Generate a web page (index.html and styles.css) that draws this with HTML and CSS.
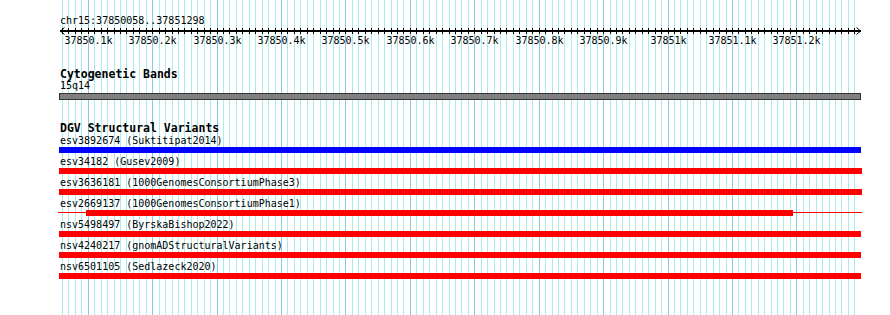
FILE: index.html
```html
<!DOCTYPE html>
<html>
<head>
<meta charset="utf-8">
<title>Genome view</title>
<link rel="stylesheet" href="styles.css">
</head>
<body>
<div class="view">
  <svg class="grid" id="grid" width="890" height="315" shape-rendering="crispEdges"></svg>
  <div class="content">
    <div class="ruler">
      <div class="loc">chr15:37850058..37851298</div>
      <svg class="scale" id="scale" width="890" height="20" shape-rendering="crispEdges">
        <rect x="60" y="3" width="801" height="2" fill="#000"></rect>
        <polyline points="64.5,0.5 60.5,4 64.5,7.5" fill="none" stroke="#000" stroke-width="1" shape-rendering="auto"></polyline>
        <polyline points="856.5,0.5 860.5,4 856.5,7.5" fill="none" stroke="#000" stroke-width="1" shape-rendering="auto"></polyline>
      </svg>
    </div>

    <section class="track cyto">
      <h2 class="track-title">Cytogenetic Bands</h2>
      <div class="feat-label">15q14</div>
      <div class="band"></div>
    </section>

    <section class="track dgv">
      <h2 class="track-title">DGV Structural Variants</h2>
      <div class="sv-list">
        <div class="sv">
          <div class="feat-label">esv3892674 (Suktitipat2014)</div>
          <div class="sv-bar blue" style="width:802px"></div>
        </div>
        <div class="sv">
          <div class="feat-label">esv34182 (Gusev2009)</div>
          <div class="sv-bar" style="width:803px"></div>
        </div>
        <div class="sv">
          <div class="feat-label">esv3636181 (1000GenomesConsortiumPhase3)</div>
          <div class="sv-bar" style="width:803px"></div>
        </div>
        <div class="sv">
          <div class="feat-label">esv2669137 (1000GenomesConsortiumPhase1)</div>
          <div class="sv-split">
            <div class="thin" style="width:28px"></div>
            <div class="thick" style="width:707px"></div>
            <div class="thin" style="width:69px"></div>
          </div>
        </div>
        <div class="sv">
          <div class="feat-label">nsv5498497 (ByrskaBishop2022)</div>
          <div class="sv-bar" style="width:802px"></div>
        </div>
        <div class="sv">
          <div class="feat-label">nsv4240217 (gnomADStructuralVariants)</div>
          <div class="sv-bar" style="width:802px"></div>
        </div>
        <div class="sv">
          <div class="feat-label">nsv6501105 (Sedlazeck2020)</div>
          <div class="sv-bar" style="width:802px"></div>
        </div>
      </div>
    </section>
  </div>
</div>
<script src="script.js"></script>
</body>
</html>
```

FILE: styles.css
```css
* { box-sizing: content-box; }

body {
  margin: 0;
  background: #ffffff;
  color: #000;
  font-family: "DejaVu Sans Mono", "Liberation Mono", monospace;
  font-size: 10px;
}

.view {
  position: relative;
  width: 890px;
  height: 315px;
  overflow: hidden;
}

.grid {
  position: absolute;
  left: 0;
  top: 0;
  z-index: 0;
}

.content {
  position: relative;
  z-index: 1;
}

.loc {
  padding-top: 15px;
  margin-left: 59px;
  padding-left: 1px;
  line-height: 12px;
}

.scale {
  display: block;
}

.scale-label {
  font-family: "DejaVu Sans Mono", "Liberation Mono", monospace;
  font-size: 10px;
}

.track {
  margin-left: 59px;
  width: 803px;
}

.track-title {
  margin: 0;
  padding-left: 1px;
  font-size: 11.5px;
  font-weight: bold;
  line-height: 12px;
}

.cyto {
  margin-top: 21px;
}

.feat-label {
  padding-left: 1px;
  line-height: 12px;
  white-space: nowrap;
}

.band {
  margin-top: 1px;
  width: 800px;
  height: 5px;
  border: 1px solid #333;
  background: #808080;
}

.dgv {
  margin-top: 22px;
}

.sv-list {
  margin-top: 1px;
}

.sv {
  margin-bottom: 3px;
}

.sv-bar {
  height: 6px;
  background: #ff0000;
}

.sv-bar.blue {
  background: #0000ff;
}

.sv-split {
  display: flex;
  align-items: flex-start;
  height: 6px;
  margin-left: -1px;
}

.sv-split .thin {
  height: 1px;
  margin-top: 2px;
  background: #ff0000;
}

.sv-split .thick {
  height: 6px;
  background: #ff0000;
}
```

FILE: script.js
```js
(function () {
  var NS = "http://www.w3.org/2000/svg";
  var start = 37850058;
  var x0 = 60.7;
  var scale = 0.6442;
  function px(bp) { return Math.round(x0 + (bp - start) * scale) + 0.5; }

  var grid = document.getElementById("grid");
  var sc = document.getElementById("scale");

  for (var bp = 37850060; bp <= 37851298; bp += 10) {
    var x = px(bp);
    var major = bp % 100 === 0;
    var l = document.createElementNS(NS, "line");
    l.setAttribute("x1", x); l.setAttribute("x2", x);
    l.setAttribute("y1", 0); l.setAttribute("y2", 315);
    l.setAttribute("stroke", major ? "#88c8ea" : "#aaecec");
    l.setAttribute("stroke-width", 1);
    grid.appendChild(l);

    var t = document.createElementNS(NS, "line");
    t.setAttribute("x1", x); t.setAttribute("x2", x);
    t.setAttribute("y1", 1); t.setAttribute("y2", 7);
    t.setAttribute("stroke", "#000");
    t.setAttribute("stroke-width", 1);
    sc.appendChild(t);

    if (major) {
      var k = bp / 1000;
      var txt = document.createElementNS(NS, "text");
      txt.setAttribute("x", x);
      txt.setAttribute("y", 17);
      txt.setAttribute("text-anchor", "middle");
      txt.setAttribute("class", "scale-label");
      txt.textContent = (Math.round(k * 10) / 10) + "k";
      sc.appendChild(txt);
    }
  }
})();
```
